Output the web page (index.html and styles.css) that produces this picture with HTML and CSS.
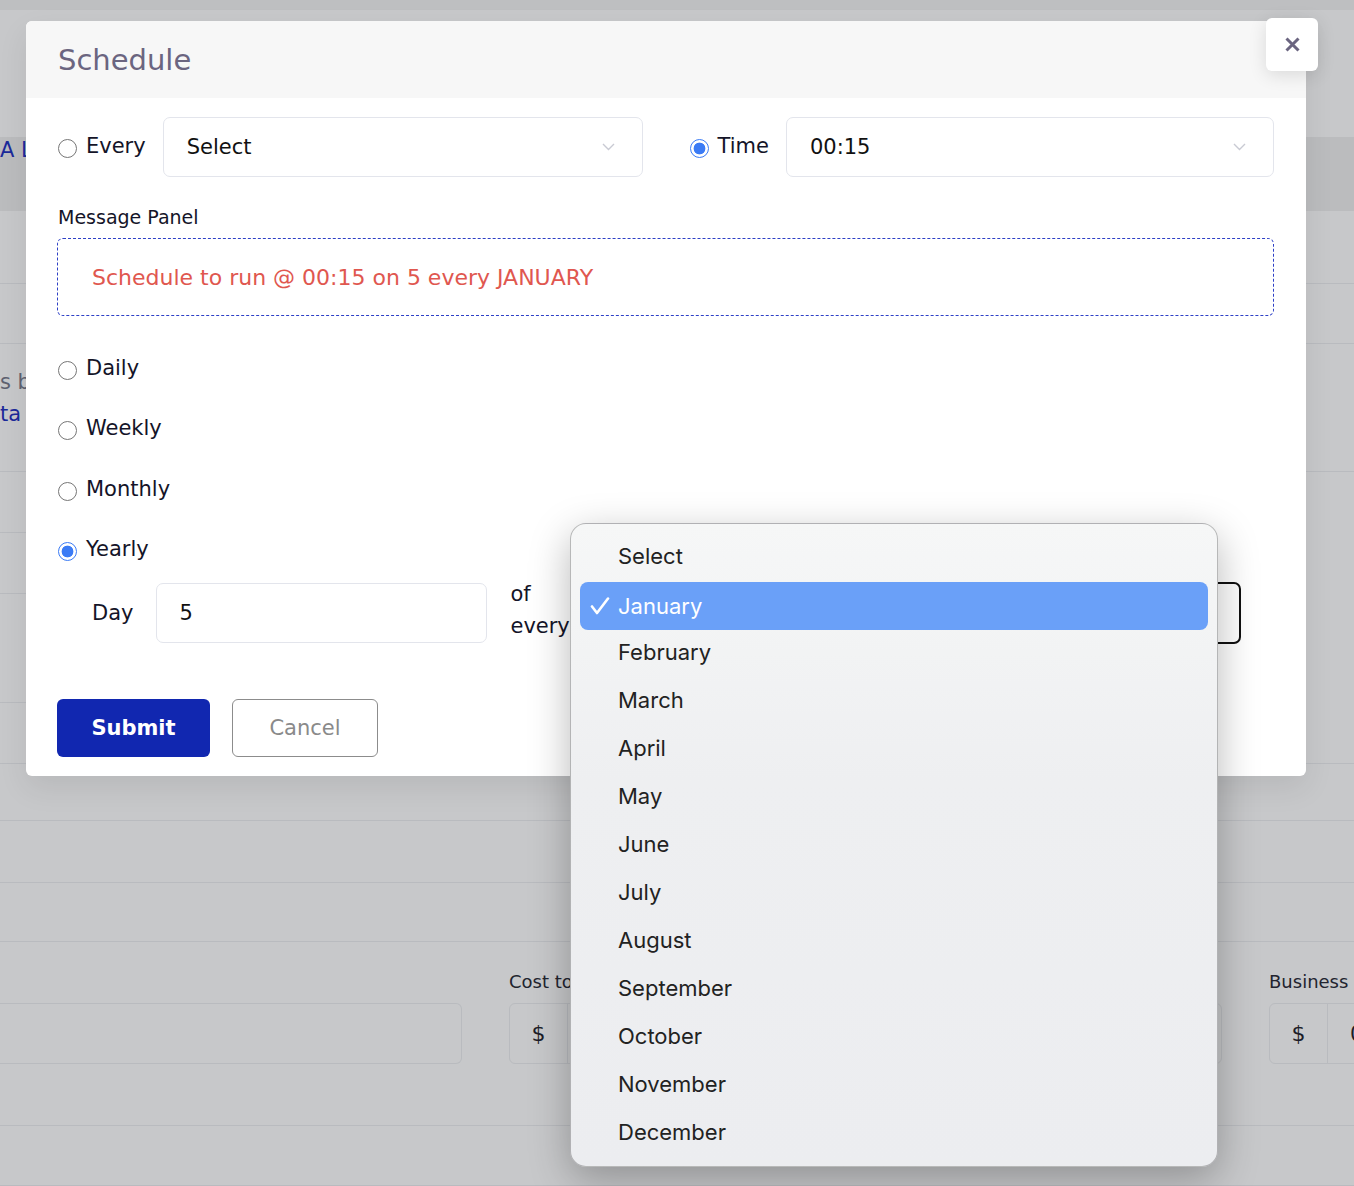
FILE: index.html
```html
<!DOCTYPE html>
<html lang="en">
<head>
  <meta charset="UTF-8">
  <title>Schedule</title>
  <link rel="stylesheet" href="styles.css">
</head>
<body>
<div class="page">
  <div class="page-top"></div>
  <div class="page-head"></div>
  <div class="page-band">A List</div>
  <div class="page-row r73"></div>
  <div class="page-row r60"></div>
  <div class="page-row r128 notes">
    <div class="note-grey">s by</div>
    <div class="note-blue">ta</div>
  </div>
  <div class="page-split">
    <div class="page-row r61"></div>
    <div class="page-row r61"></div>
    <div class="page-row r109"></div>
  </div>
  <div class="page-row r61"></div>
  <div class="page-row r57"></div>
  <div class="page-row r62"></div>
  <div class="page-row r59"></div>
  <div class="page-row r184 page-form">
    <div class="bg-field w462">
      <div class="bg-label">&nbsp;</div>
      <div class="bg-input"></div>
    </div>
    <div class="bg-field w713">
      <div class="bg-label">Cost to run</div>
      <div class="bg-input"><span class="bg-addon">$</span></div>
    </div>
    <div class="bg-field w300">
      <div class="bg-label">Business</div>
      <div class="bg-input"><span class="bg-addon">$</span><span class="bg-value">0</span></div>
    </div>
  </div>
  <div class="page-row r60"></div>
</div>

<div class="overlay">
  <div class="modal">
    <div class="modal-head">
      <h2 class="modal-title">Schedule</h2>
    </div>
    <button class="close-btn" type="button">
      <svg width="15" height="15" viewBox="0 0 15 15"><path d="M1.5 1.5 L13.5 13.5 M13.5 1.5 L1.5 13.5" stroke="#6b6580" stroke-width="3" fill="none"/></svg>
    </button>

    <div class="modal-body">
      <div class="top-row">
        <div class="choice">
          <span class="radio"></span>
          <span class="choice-label">Every</span>
          <div class="select">
            <span>Select</span>
            <svg width="13" height="8" viewBox="0 0 13 8"><polyline points="1,1 6.5,6.5 12,1" stroke="#c9cad3" stroke-width="1.4" fill="none"/></svg>
          </div>
        </div>
        <div class="choice">
          <span class="radio on"></span>
          <span class="choice-label">Time</span>
          <div class="select">
            <span>00:15</span>
            <svg width="13" height="8" viewBox="0 0 13 8"><polyline points="1,1 6.5,6.5 12,1" stroke="#c9cad3" stroke-width="1.4" fill="none"/></svg>
          </div>
        </div>
      </div>

      <div class="field-label">Message Panel</div>
      <div class="message">Schedule to run @ 00:15 on 5 every JANUARY</div>

      <div class="freq-list">
        <div class="choice freq"><span class="radio"></span><span class="choice-label">Daily</span></div>
        <div class="choice freq"><span class="radio"></span><span class="choice-label">Weekly</span></div>
        <div class="choice freq"><span class="radio"></span><span class="choice-label">Monthly</span></div>
        <div class="choice freq"><span class="radio on"></span><span class="choice-label">Yearly</span></div>
      </div>

      <div class="day-row">
        <span class="day-label">Day</span>
        <div class="day-input">5</div>
        <div class="of-every">of<br>every</div>
        <div class="month-select"></div>
      </div>

      <div class="actions">
        <button class="btn btn-primary" type="button">Submit</button>
        <button class="btn btn-secondary" type="button">Cancel</button>
      </div>
    </div>
  </div>

  <ul class="menu">
    <li>Select</li>
    <li class="active">
      <svg class="check" width="20" height="18" viewBox="0 0 20 18"><polyline points="2,9.5 7,16 18,1.5" stroke="#fff" stroke-width="2.6" fill="none" stroke-linecap="round" stroke-linejoin="round"/></svg>
      January
    </li>
    <li>February</li>
    <li>March</li>
    <li>April</li>
    <li>May</li>
    <li>June</li>
    <li>July</li>
    <li>August</li>
    <li>September</li>
    <li>October</li>
    <li>November</li>
    <li>December</li>
  </ul>
</div>
</body>
</html>
```

FILE: styles.css
```css
* {
  box-sizing: border-box;
}
body {
  margin: 0;
  width: 1354px;
  height: 1186px;
  overflow: hidden;
  position: relative;
  background: #c7c8ca;
  font-family: "DejaVu Sans", sans-serif;
  color: #141428;
}

/* page behind the dialog */
.page-top {
  height: 10px;
  background: #bebfc1;
}
.page-head {
  height: 127px;
}
.page-band {
  height: 74px;
  background: #bbbcbe;
  font-size: 21px;
  line-height: 26px;
  color: #1b2a9a;
}
.page-row {
  border-bottom: 1px solid #b9bbbf;
}
.page-split {
  width: 600px;
}
.r57 { height: 57px; }
.r59 { height: 59px; }
.r60 { height: 60px; }
.r61 { height: 61px; }
.r62 { height: 62px; }
.r73 { height: 73px; }
.r109 { height: 109px; }
.r128 { height: 128px; }
.r184 { height: 184px; }
.notes {
  padding-top: 22px;
  font-size: 21px;
  line-height: 32px;
}
.note-grey {
  color: #5e6170;
}
.note-blue {
  color: #1b2a9a;
}
.page-form {
  display: flex;
  gap: 47px;
  padding-top: 29px;
}
.w462 { width: 462px; flex: none; }
.w713 { width: 713px; flex: none; }
.w300 { width: 300px; flex: none; }
.bg-label {
  font-size: 18px;
  line-height: 22px;
  margin-bottom: 10px;
  color: #22242f;
}
.bg-input {
  height: 61px;
  border: 1px solid #b9bbbf;
  border-radius: 6px;
  display: flex;
  align-items: center;
}
.w462 .bg-input {
  border-left: 0;
  border-radius: 0 6px 6px 0;
}
.bg-addon {
  width: 58px;
  height: 100%;
  border-right: 1px solid #b9bbbf;
  display: flex;
  align-items: center;
  justify-content: center;
  font-size: 22px;
  color: #1c1d28;
}
.bg-value {
  padding-left: 22px;
  font-size: 21px;
  color: #1c1d28;
}

/* dialog */
.overlay {
  position: absolute;
  top: 0;
  left: 0;
  right: 0;
  bottom: 0;
}
.modal {
  position: relative;
  width: 1280px;
  margin: 21px 0 0 26px;
  background: #fff;
  border-radius: 6px;
  box-shadow: 0 12px 30px rgba(0, 0, 0, 0.08);
}
.modal-head {
  height: 77px;
  padding: 0 32px;
  display: flex;
  align-items: center;
  background: #f7f7f7;
  border-radius: 6px 6px 0 0;
}
.modal-title {
  margin: 0;
  font-size: 29px;
  font-weight: normal;
  color: #6b6580;
}
.close-btn {
  position: absolute;
  left: 1240px;
  top: -3px;
  width: 52px;
  height: 53px;
  padding: 0;
  border: 0;
  border-radius: 6px;
  background: #fff;
  box-shadow: 0 4px 18px rgba(0, 0, 0, 0.12);
  display: flex;
  align-items: center;
  justify-content: center;
}
.modal-body {
  padding: 19px 32px 19px 31px;
}
.top-row {
  display: grid;
  grid-template-columns: 1fr 1fr;
  column-gap: 46px;
}
.choice {
  display: flex;
  align-items: center;
}
.radio {
  flex: none;
  width: 19px;
  height: 19px;
  margin: 2px 0 0 1px;
  border: 1px solid #767676;
  border-radius: 50%;
  background: #fff;
}
.radio.on {
  border: 1.5px solid #3b7bf5;
  background: radial-gradient(circle, #3b7bf5 0 5.6px, #fff 6.2px);
}
.choice-label {
  margin-left: 9px;
  font-size: 21px;
  line-height: 30px;
}
.select {
  flex: 1;
  height: 60px;
  margin-left: 17px;
  padding: 0 27px 0 23px;
  border: 1px solid #e3e5ec;
  border-radius: 7px;
  display: flex;
  align-items: center;
  justify-content: space-between;
  font-size: 21px;
  color: #111;
}
.top-row .choice-label {
  margin-top: -3px;
}
.field-label {
  margin: 29px 0 10px 1px;
  font-size: 19px;
  line-height: 22px;
}
.message {
  height: 78px;
  padding: 0 34px;
  border: 1px dashed #2e40c6;
  border-radius: 6px;
  display: flex;
  align-items: center;
  font-size: 22px;
  color: #e0574f;
}
.freq-list {
  margin-top: 38px;
  display: flex;
  flex-direction: column;
  gap: 30.6px;
}
.freq {
  height: 30px;
}
.freq .choice-label {
  margin-top: -3px;
}
.day-row {
  margin-top: 16px;
  padding-left: 35px;
  display: flex;
  align-items: center;
}
.day-label {
  font-size: 21px;
}
.day-input {
  width: 331px;
  height: 60px;
  margin-left: 23px;
  padding-left: 22px;
  border: 1px solid #e3e5ec;
  border-radius: 7px;
  display: flex;
  align-items: center;
  font-size: 21px;
  color: #111;
}
.of-every {
  width: 62px;
  margin: -6px 0 0 23px;
  font-size: 21px;
  line-height: 32px;
}
.month-select {
  flex: 1;
  height: 62px;
  margin: 0 33px 0 4px;
  border: 2px solid #111;
  border-radius: 7px;
}
.actions {
  margin-top: 55px;
  display: flex;
  gap: 22px;
}
.btn {
  height: 58px;
  border-radius: 6px;
  font-family: inherit;
  font-size: 21px;
}
.btn-primary {
  width: 153px;
  border: 0;
  background: #1127b0;
  color: #fff;
  font-weight: bold;
}
.btn-secondary {
  width: 146px;
  border: 1px solid #8c8c8c;
  background: #fff;
  color: #8a8a8a;
}

/* open month list */
.menu {
  position: absolute;
  left: 570px;
  top: 523px;
  width: 648px;
  margin: 0;
  padding: 8px 9px 10px;
  list-style: none;
  border: 1px solid rgba(0, 0, 0, 0.25);
  border-radius: 16px;
  background: linear-gradient(#f6f7f7, #eeeff1 40%, #ecedf0);
  box-shadow: 0 12px 40px rgba(0, 0, 0, 0.28);
  font-family: Inter, sans-serif;
  font-size: 22px;
  color: #222;
}
.menu li {
  position: relative;
  height: 48px;
  padding-left: 38px;
  display: flex;
  align-items: center;
  border-radius: 8px;
}
.menu li.active {
  background: #6aa0f8;
  color: #fff;
  margin-top: 2px;
  margin-bottom: -2px;
}
.check {
  position: absolute;
  left: 10px;
  top: 15px;
}
```
